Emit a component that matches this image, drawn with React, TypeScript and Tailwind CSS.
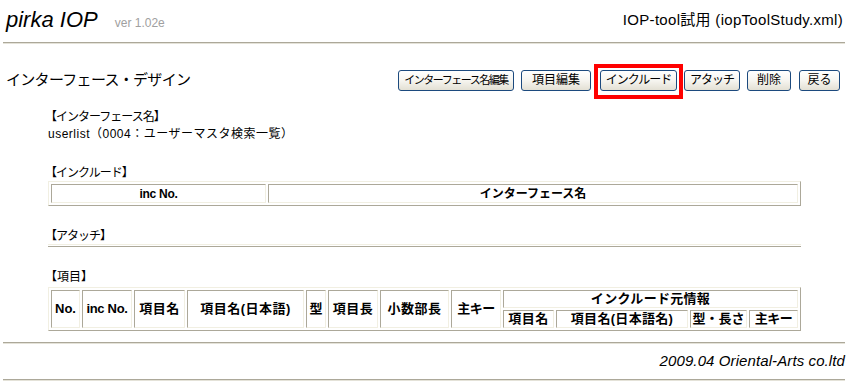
import React from "react";

const cellBase =
  "border border-t-[#aca899] border-l-[#aca899] border-r-[#f1efe2] border-b-[#f1efe2] p-0 font-bold text-center leading-[16px] whitespace-nowrap";
const cell = cellBase + " text-[12px]";
const cell13 = cellBase + " text-[13px]";
const tableCls =
  "table-fixed border-separate border-spacing-[2px] border border-t-[#f1efe2] border-l-[#f1efe2] border-b-[#aca899] border-r-[#aca899] w-[753px]";

function Hr({ className = "" }: { className?: string }) {
  return (
    <div
      className={
        "ml-[3px] mr-[6px] h-[2px] border-t border-t-[#aca899] border-b border-b-[#e4e2d8] " +
        className
      }
    />
  );
}

function Btn({
  children,
  w,
  track = "",
}: {
  children: React.ReactNode;
  w: string;
  track?: string;
}) {
  return (
    <button
      className={
        "block h-[21px] rounded-[3px] border border-[#1c4a7e] bg-gradient-to-b from-[#ffffff] via-[#f6f5f0] to-[#e3e0d4] leading-[19px] text-black whitespace-nowrap text-center p-0 " +
        w +
        " " +
        track
      }
    >
      {children}
    </button>
  );
}

export default function App() {
  return (
    <div className="w-[851px] h-[386px] overflow-hidden bg-white text-black font-['Liberation_Sans','Noto_Sans_CJK_JP',sans-serif]">
      {/* header */}
      <div className="flex h-[40px] items-center justify-between pl-[6px] pr-[8px]">
        <div className="flex items-baseline gap-[17px]">
          <span className="text-[22px] italic leading-[26px]">pirka IOP</span>
          <span className="text-[12px] text-[#a0a0a0]">ver 1.02e</span>
        </div>
        <div className="text-[15px] tracking-[0.3px]">IOP-tool試用 (iopToolStudy.xml)</div>
      </div>
      <Hr className="mt-[2px]" />

      {/* title row */}
      <div className="mt-[26px] flex h-[21px] items-center justify-between pl-[6px] pr-[11px]">
        <div className="text-[15px] tracking-[-0.7px] leading-[20px] -mt-[2px]">インターフェース・デザイン</div>
        <div className="flex items-center">
          <Btn w="w-[116px] text-[11px]" track="tracking-[-1.5px]">インターフェース名編集</Btn>
          <div className="ml-[7px]">
            <Btn w="w-[70px] text-[12px]">項目編集</Btn>
          </div>
          <div className="relative ml-[9px]">
            <Btn w="w-[77px] text-[12px]" track="tracking-[-1px]">インクルード</Btn>
            <div className="pointer-events-none absolute -left-[6px] -right-[6px] -top-[6px] -bottom-[8px] border-[4px] border-[#ff0000]" />
          </div>
          <div className="ml-[7px]">
            <Btn w="w-[56px] text-[12px]" track="tracking-[-1px]">アタッチ</Btn>
          </div>
          <div className="ml-[7px]">
            <Btn w="w-[44px] text-[12px]">削除</Btn>
          </div>
          <div className="ml-[8px]">
            <Btn w="w-[41px] text-[12px]">戻る</Btn>
          </div>
        </div>
      </div>

      {/* body */}
      <div className="pl-[48px] text-[12px] leading-[17px]">
        <div className="mt-[18px] tracking-[-1px] -ml-[3px]">【インターフェース名】</div>
        <div className="tracking-[0.5px]">userlist（0004：ユーザーマスタ検索一覧）</div>

        <div className="mt-[22px] tracking-[-1px] -ml-[3px]">【インクルード】</div>
        <table className={tableCls + " -mt-[1px]"}>
          <colgroup>
            <col className="w-[215px]" />
            <col className="w-[530px]" />
          </colgroup>
          <thead>
            <tr>
              <th className={cell + " h-[19px] tracking-[-0.3px]"}>inc No.</th>
              <th className={cell + " h-[19px]"}>インターフェース名</th>
            </tr>
          </thead>
        </table>

        <div className="mt-[22px] tracking-[-1px] -ml-[3px]">【アタッチ】</div>
        <div className="w-[753px] h-[3px] -mt-[1px] border-t border-t-[#f1efe2] border-b border-b-[#aca899]" />

        <div className="mt-[22px] -ml-[3px]">【項目】</div>
        <table className={tableCls + " mt-[1px]"}>
          <colgroup>
            <col className="w-[29px]" />
            <col className="w-[50px]" />
            <col className="w-[51px]" />
            <col className="w-[117px]" />
            <col className="w-[20px]" />
            <col className="w-[50px]" />
            <col className="w-[69px]" />
            <col className="w-[50px]" />
            <col className="w-[51px]" />
            <col className="w-[132px]" />
            <col className="w-[57px]" />
            <col className="w-[49px]" />
          </colgroup>
          <thead>
            <tr>
              <th rowSpan={2} className={cell13}>No.</th>
              <th rowSpan={2} className={cell13 + " tracking-[-0.3px]"}>inc No.</th>
              <th rowSpan={2} className={cell13 + " tracking-[0.5px]"}>項目名</th>
              <th rowSpan={2} className={cell13 + " tracking-[0.5px]"}>項目名(日本語)</th>
              <th rowSpan={2} className={cell13}>型</th>
              <th rowSpan={2} className={cell13 + " tracking-[0.5px]"}>項目長</th>
              <th rowSpan={2} className={cell13 + " tracking-[0.5px]"}>小数部長</th>
              <th rowSpan={2} className={cell13 + " tracking-[-0.5px]"}>主キー</th>
              <th colSpan={4} className={cell13 + " h-[18px] tracking-[0.3px]"}>インクルード元情報</th>
            </tr>
            <tr>
              <th className={cell13 + " h-[18px] tracking-[0.5px]"}>項目名</th>
              <th className={cell13 + " h-[18px] tracking-[0.3px]"}>項目名(日本語名)</th>
              <th className={cell13 + " h-[18px]"}>型・長さ</th>
              <th className={cell13 + " h-[18px] tracking-[-0.5px]"}>主キー</th>
            </tr>
          </thead>
        </table>
      </div>

      <Hr className="mt-[11px]" />
      <div className="flex h-[35px] items-center justify-end pr-[6px]">
        <span className="text-[15px] italic tracking-[0.1px]">2009.04 Oriental-Arts co.ltd</span>
      </div>
      <Hr />
    </div>
  );
}
